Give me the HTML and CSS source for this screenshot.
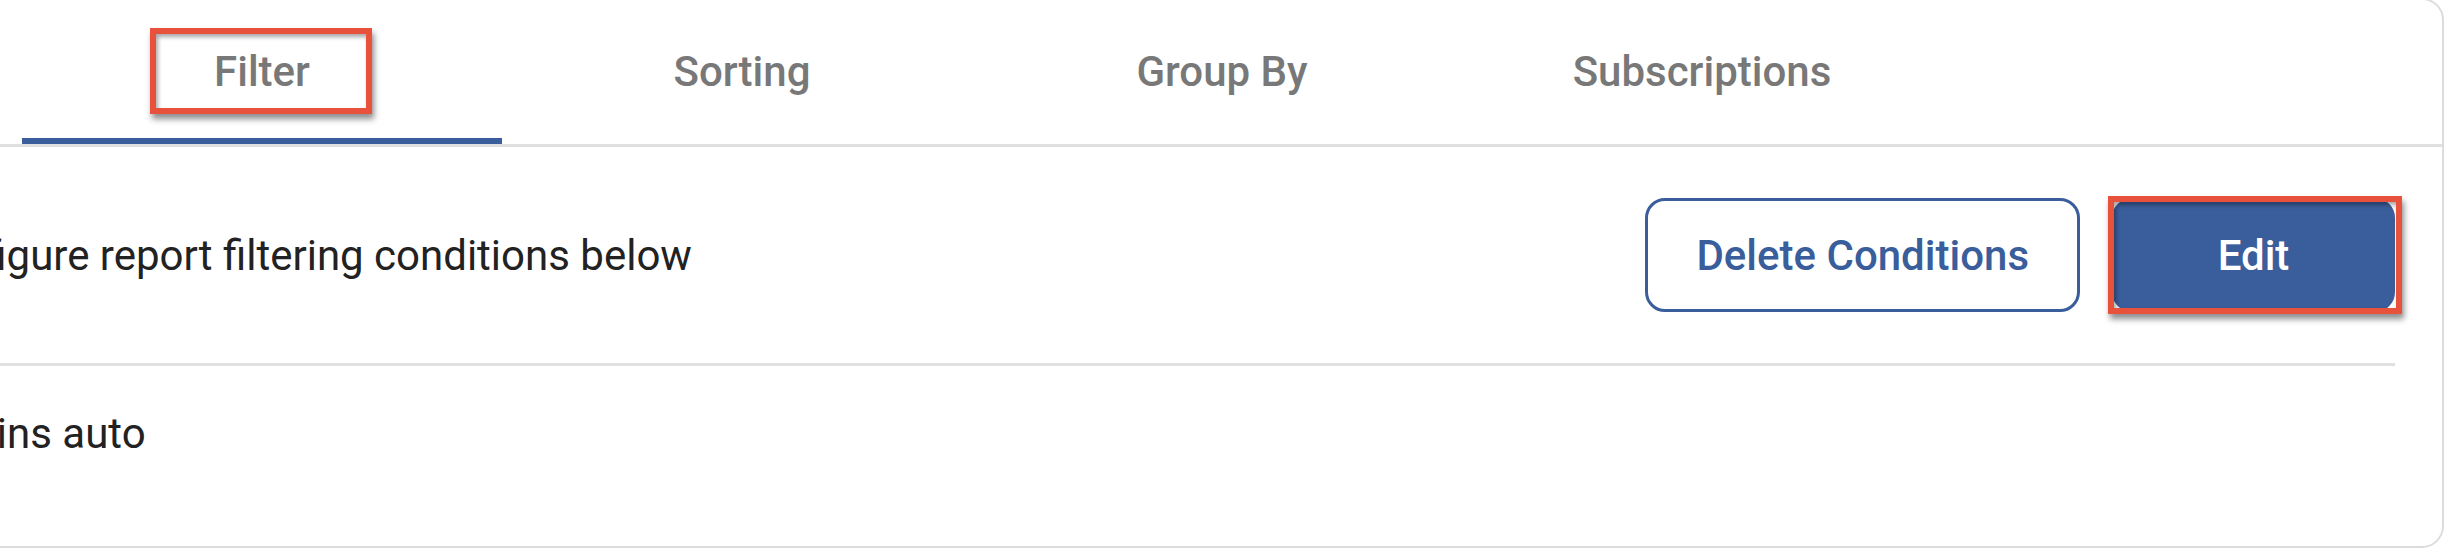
FILE: index.html
```html
<!DOCTYPE html>
<html lang="en">
<head>
<meta charset="utf-8">
<title>Report settings</title>
<link rel="stylesheet" href="styles.css">
</head>
<body>
  <div class="card">
    <nav class="tabs">
      <div class="tab active"><span class="tab-label">Filter</span><span class="mark mark-tab"></span></div>
      <div class="tab"><span class="tab-label">Sorting</span></div>
      <div class="tab"><span class="tab-label">Group By</span></div>
      <div class="tab"><span class="tab-label">Subscriptions</span></div>
    </nav>
    <div class="panel">
      <div class="row header-row">
        <p class="hint">Please configure report filtering conditions below</p>
        <div class="actions">
          <button class="btn btn-outline" type="button">Delete Conditions</button>
          <button class="btn btn-primary" type="button">Edit<span class="mark mark-btn"></span></button>
        </div>
      </div>
      <div class="row condition-row">
        <p class="condition">Make contains auto</p>
      </div>
    </div>
  </div>
</body>
</html>
```

FILE: styles.css
```css
html, body {
  margin: 0;
  padding: 0;
  background: #ffffff;
  overflow: hidden;
}

body {
  font-family: Roboto, "Noto Sans", "Liberation Sans", sans-serif;
  color: #212121;
}

.card {
  margin: -2px 2px 0 -272px;
  border: 2px solid #dcdcdc;
  border-radius: 22px;
  background: #ffffff;
}

.tabs {
  display: flex;
  padding-left: 292px;
  border-bottom: 3px solid #e0e0e0;
}

.tab {
  position: relative;
  width: 480px;
  height: 144px;
  line-height: 144px;
  text-align: center;
  font-size: 42px;
  font-weight: 500;
  color: #787878;
}

.tab.active {
  box-shadow: inset 0 -6px 0 #3a5d9b;
}

.mark {
  position: absolute;
  box-sizing: border-box;
  border: 6px solid #e8513b;
  box-shadow: 2px 5px 6px rgba(0, 0, 0, 0.45), inset 2px 3px 4px rgba(0, 0, 0, 0.35);
  pointer-events: none;
}

.mark-tab {
  left: 128px;
  top: 28px;
  width: 222px;
  height: 86px;
}

.panel {
  padding: 0 47px 0 48px;
}

.row {
  display: flex;
  align-items: center;
}

.header-row {
  justify-content: space-between;
  height: 216px;
  border-bottom: 3px solid #e0e0e0;
}

.hint,
.condition {
  margin: 0;
  font-size: 42px;
  font-weight: 400;
  color: #222222;
  white-space: nowrap;
}

.condition-row {
  padding: 43px 0 88px;
}

.actions {
  display: flex;
  gap: 32px;
}

.btn {
  position: relative;
  box-sizing: border-box;
  height: 114px;
  border: 3px solid #3a5d9b;
  border-radius: 20px;
  font-family: Roboto, "Noto Sans", "Liberation Sans", sans-serif;
  font-size: 42px;
  font-weight: 500;
  cursor: pointer;
}

.btn-outline {
  padding: 0 48px;
  background: #ffffff;
  color: #3a5d9b;
}

.btn-primary {
  width: 283px;
  padding: 0;
  background: #3a5d9b;
  color: #ffffff;
}

.mark-btn {
  left: -7px;
  top: -5px;
  right: -10px;
  bottom: -5px;
}
```
